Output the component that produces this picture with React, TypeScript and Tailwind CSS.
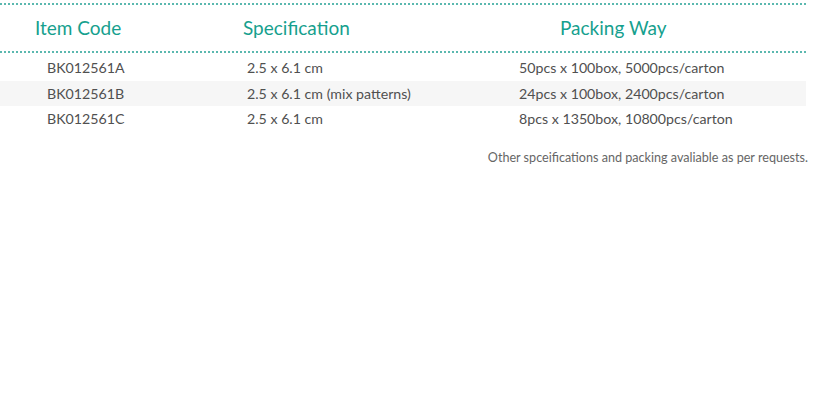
const rows = [
  ["BK012561A", "2.5 x 6.1 cm", "50pcs x 100box, 5000pcs/carton"],
  ["BK012561B", "2.5 x 6.1 cm (mix patterns)", "24pcs x 100box, 2400pcs/carton"],
  ["BK012561C", "2.5 x 6.1 cm", "8pcs x 1350box, 10800pcs/carton"],
];

export default function App() {
  return (
    <div className="w-[827px] h-[413px] bg-white pt-[3px]" style={{ fontFamily: "Lato, 'Open Sans', sans-serif" }}>
      <div className="w-[806px]">
        {/* header */}
        <div className="flex items-center h-[50px] border-y-2 border-dotted border-[#5bb8af] text-[19px] text-[#16a08e]">
          <div className="w-[200px] pl-[35px]">Item Code</div>
          <div className="w-[270px] pl-[43px]">Specification</div>
          <div className="flex-1 pl-[90px]">Packing Way</div>
        </div>

        {/* rows */}
        <div className="pt-[2px]">
          {rows.map((r, i) => (
            <div
              key={r[0]}
              className={`flex items-center h-[25.5px] text-[14.2px] text-[#505050] ${i === 1 ? "bg-[#f6f6f6]" : ""}`}
            >
              <div className="w-[200px] pl-[47px]">{r[0]}</div>
              <div className="w-[270px] pl-[47px]">{r[1]}</div>
              <div className="flex-1 pl-[49px]">{r[2]}</div>
            </div>
          ))}
        </div>

        <p className="mt-[17px] text-right text-[12.6px] text-[#666] mr-[-2px]">
          Other spceifications and packing avaliable as per requests.
        </p>
      </div>
    </div>
  );
}
